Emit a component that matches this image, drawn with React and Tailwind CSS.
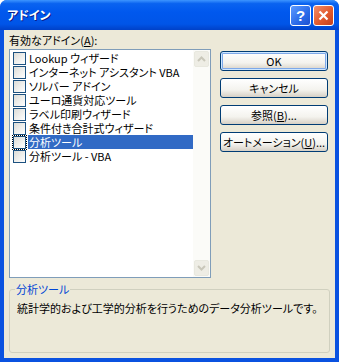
import React from "react";

const items = [
  "Lookup ウィザード",
  "インターネット アシスタント VBA",
  "ソルバー アドイン",
  "ユーロ通貨対応ツール",
  "ラベル印刷ウィザード",
  "条件付き合計式ウィザード",
  "分析ツール",
  "分析ツール - VBA",
];

const selected = 6;

function Checkbox({ focused }) {
  return (
    <span className={`flex h-[15px] w-[15px] shrink-0 items-center justify-center ${focused ? "outline-1 outline-dotted outline-black -outline-offset-1" : ""}`}>
      <span className="block h-[13px] w-[13px] border border-[#1c5180] bg-[linear-gradient(135deg,#dcdcd7,#ffffff)]" />
    </span>
  );
}

function XpButton({ children, isDefault }) {
  return (
    <button
      className={`flex h-[20px] w-[108px] items-center justify-center whitespace-nowrap rounded-[3px] border border-[#003c74] bg-[linear-gradient(180deg,#ffffff_0%,#f4f3ee_60%,#d6d0c5_100%)] text-[11px] leading-none text-black ${
        isDefault ? "shadow-[inset_0_0_0_1px_#cee7ff,inset_0_0_0_2px_#7ea9e9]" : ""
      }`}
    >
      {children}
    </button>
  );
}

function ScrollArrow({ up }) {
  return (
    <div className="flex h-[16px] w-[15px] items-center justify-center rounded-[2px] border border-[#e8e8df] bg-[#eeede5]">
      <svg width="9" height="6" viewBox="0 0 9 6">
        <path
          d={up ? "M1 5 L4.5 1.5 L8 5" : "M1 1 L4.5 4.5 L8 1"}
          fill="none"
          stroke="#c9c7ba"
          strokeWidth="2"
        />
      </svg>
    </div>
  );
}

export default function App() {
  return (
    <div className="flex h-[362px] w-[339px] flex-col overflow-hidden rounded-t-[7px] bg-[#0a52e0] font-['Noto_Sans_CJK_JP',sans-serif] [font-feature-settings:'palt']">
      {/* Title bar */}
      <div className="flex h-[30px] shrink-0 items-center justify-between bg-[linear-gradient(180deg,#3d95ff_0%,#0a63f0_12%,#0058ee_40%,#0055e8_80%,#0041c8_100%)] pl-[7px] pr-[5px]">
        <span className="text-[12px] font-bold leading-none text-white [text-shadow:1px_1px_0_#0a1e8c]">
          アドイン
        </span>
        <div className="flex gap-[2px]">
          <div className="flex h-[21px] w-[21px] items-center justify-center rounded-[3px] border border-white bg-[linear-gradient(135deg,#5d9bff,#2a6ae8_60%,#1d4fd0)] font-['Liberation_Sans',sans-serif] text-[15px] font-bold leading-none text-white">
            ?
          </div>
          <div className="flex h-[21px] w-[21px] items-center justify-center rounded-[3px] border border-white bg-[linear-gradient(135deg,#f08e6c,#e35a2d_55%,#c2401d)]">
            <svg width="11" height="11" viewBox="0 0 11 11">
              <path d="M1.5 1.5 L9.5 9.5 M9.5 1.5 L1.5 9.5" stroke="#fff" strokeWidth="2.2" />
            </svg>
          </div>
        </div>
      </div>

      {/* Client area */}
      <div className="mx-[4px] mb-[4px] flex flex-1 flex-col bg-[#ece9d8] px-[5px] pt-[3px] text-[11px] leading-none text-black">
        <div className="flex">
          <div className="flex flex-col">
            <span className="flex h-[16px] items-center whitespace-nowrap pb-[2px]">
              有効なアドイン(<span className="underline">A</span>):
            </span>
            <div className="flex h-[229px] w-[202px] border border-[#7f9db9] bg-white">
              <div className="flex flex-1 flex-col pt-[1px] pl-[1px]">
                {items.map((item, i) => (
                  <div key={item} className="flex h-[14px] items-center gap-[1px] pl-[1px]">
                    <Checkbox focused={i === selected} />
                    <span
                      className={`flex h-[14px] flex-1 items-center whitespace-nowrap pl-[1px] ${
                        i === selected ? "bg-[#316ac5] text-white" : ""
                      }`}
                    >
                      {item}
                    </span>
                  </div>
                ))}
              </div>
              <div className="flex w-[17px] flex-col justify-between bg-[#fbfbf8] p-[1px]">
                <ScrollArrow up />
                <ScrollArrow />
              </div>
            </div>
          </div>

          <div className="ml-[9px] mt-[18px] flex flex-col gap-[7px]">
            <XpButton isDefault>OK</XpButton>
            <XpButton>キャンセル</XpButton>
            <XpButton>
              参照(<span className="underline">B</span>)...
            </XpButton>
            <XpButton>
              オートメーション(<span className="underline">U</span>)...
            </XpButton>
          </div>
        </div>

        <fieldset className="mt-[4px] h-[71px] w-[321px] rounded-[3px] border border-[#d0d0bf] pl-[7px]">
          <legend className="ml-[-2px] px-[1px] leading-[14px] text-[#0046d5]">分析ツール</legend>
          <p className="mt-[7px] whitespace-nowrap">
            統計学的および工学的分析を行うためのデータ分析ツールです。
          </p>
        </fieldset>
      </div>
    </div>
  );
}
